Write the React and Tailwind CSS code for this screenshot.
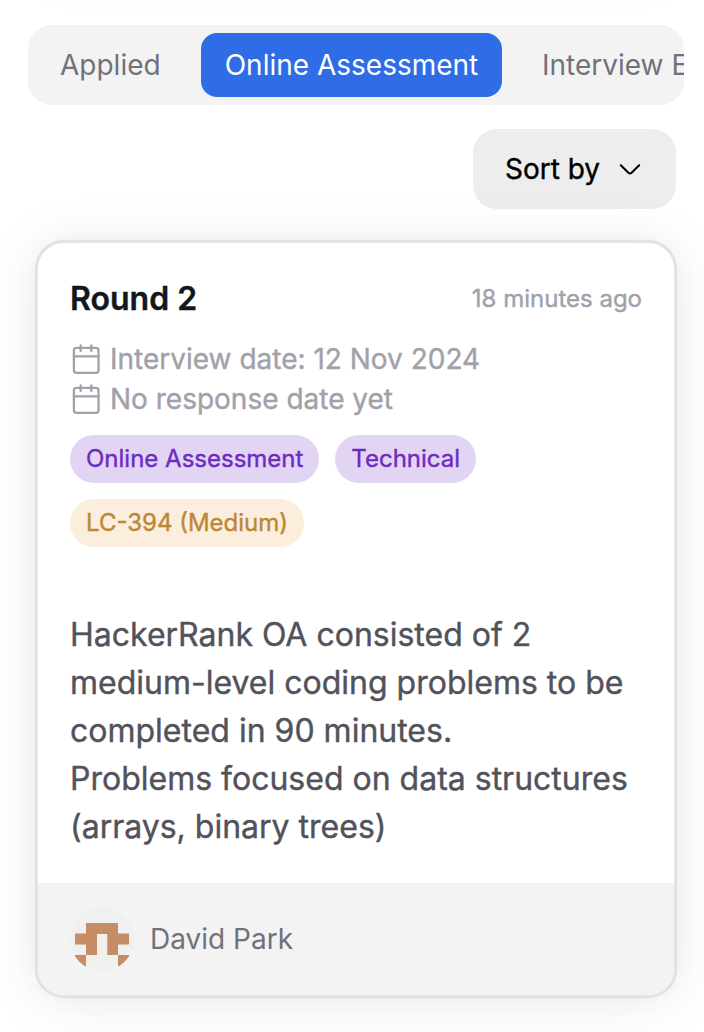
import React from "react";

function Tabs() {
  return (
    <div className="ml-7 flex h-20 w-[656px] items-center overflow-hidden rounded-3xl bg-[#f3f3f3] py-2 text-[28px] leading-10 whitespace-nowrap text-[#71717a]">
      <button className="ml-8 w-[141px] shrink-0 text-left">Applied</button>
      <button className="h-16 w-[301px] shrink-0 rounded-2xl bg-[#2f6de7] text-center text-white">
        Online Assessment
      </button>
      <button className="ml-10 shrink-0">Interview E</button>
    </div>
  );
}

function CalendarIcon() {
  return (
    <svg className="h-8 w-8 shrink-0" viewBox="0 0 32 32" fill="none" stroke="#a1a1aa" strokeWidth="2.3" strokeLinecap="round">
      <rect x="3.9" y="4.9" width="24.6" height="24.9" rx="2.6" />
      <path d="M4 13.4H28.4M10.7 2.5V8M21.3 2.5V8" />
    </svg>
  );
}

function DateRow({ children }) {
  return (
    <div className="flex h-10 items-center gap-2 text-[28px] leading-10 text-[#a1a1aa]">
      <CalendarIcon />
      <span>{children}</span>
    </div>
  );
}

function Avatar() {
  return (
    <div className="h-16 w-16 overflow-hidden rounded-full bg-[#f0f0ee]">
      <svg className="h-16 w-16" viewBox="0 0 64 64" fill="#c68c65">
        <path d="M16 16H48V26.5H59V37.5H48V48H37.3V27H27V48H16V37.5H5V26.5H16Z" />
        <path d="M5 48H16V59H5ZM48 48H59V59H48Z" />
      </svg>
    </div>
  );
}

const cardShadow =
  "shadow-[0_0_30px_rgba(0,0,0,0.03),0_4px_60px_rgba(0,0,0,0.08),0_0_2px_rgba(0,0,0,0.3)]";

export default function App() {
  return (
    <div className="flex h-[1032px] w-[704px] flex-col overflow-hidden bg-white font-['Inter',sans-serif] text-black">
      <div className={"-mt-20 mb-[65px] ml-9 h-10 w-[640px] shrink-0 rounded-[28px] bg-white " + cardShadow} />
      <Tabs />
      <button className="mt-6 mr-7 flex h-20 w-[203px] shrink-0 items-center self-end rounded-3xl bg-[#ededed] pl-8 text-[28px] leading-10 [-webkit-text-stroke:0.4px]">
        <span className="w-[109px] text-left whitespace-nowrap">Sort by</span>
        <svg className="h-8 w-8" viewBox="0 0 32 32" fill="none" stroke="black" strokeWidth="2" strokeLinecap="round" strokeLinejoin="round">
          <path d="M6.8 12.2L14.4 19.7Q16 21.1 17.6 19.7L25.2 12.2" />
        </svg>
      </button>
      <article
        className={"mt-8 ml-9 flex h-[756px] w-[640px] shrink-0 flex-col overflow-hidden rounded-[28px] border-2 border-[#e4e4e7] bg-white " + cardShadow}
      >
        <div className="flex flex-1 flex-col px-8 pt-8 [-webkit-text-stroke:0.4px]">
          <div className="flex h-12 items-center justify-between">
            <h2 className="text-[32px] leading-[48px] font-semibold text-[#11181c]">Round 2</h2>
            <time className="text-2xl text-[#a1a1aa]">18 minutes ago</time>
          </div>
          <div className="mt-4">
            <DateRow>Interview date: 12 Nov 2024</DateRow>
            <DateRow>No response date yet</DateRow>
          </div>
          <div className="mt-4 flex flex-wrap gap-4 text-2xl leading-[48px]">
            <span className="h-12 rounded-full bg-[#e2d5f3] px-4 text-[#6d2bc2]">Online Assessment</span>
            <span className="h-12 rounded-full bg-[#e2d5f3] px-4 text-[#6d2bc2]">Technical</span>
            <span className="h-12 rounded-full bg-[#fbeedc] px-4 text-[#bd8735]">LC-394 (Medium)</span>
          </div>
          <p className="mt-16 text-[32px] leading-[48px] whitespace-nowrap text-[#52525b]">
            HackerRank OA consisted of 2<br />
            medium-level coding problems to be<br />
            completed in 90 minutes.<br />
            Problems focused on data structures<br />
            (arrays, binary trees)
          </p>
        </div>
        <footer className="flex h-28 shrink-0 items-center gap-4 bg-[#f3f3f3] px-8">
          <Avatar />
          <span className="text-[28px] leading-10 text-[#71717a]">David Park</span>
        </footer>
      </article>
    </div>
  );
}
